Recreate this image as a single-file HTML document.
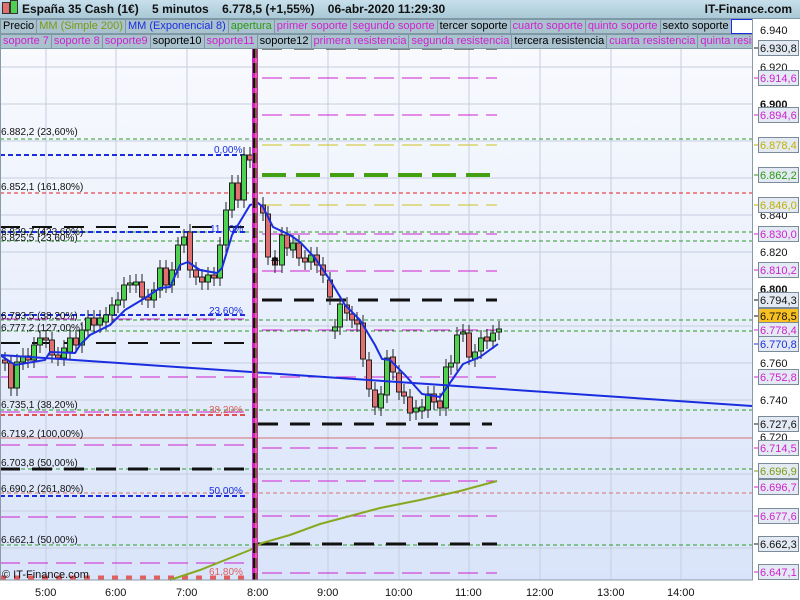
<!DOCTYPE html>
<html><head><meta charset="utf-8">
<style>
body{margin:0;width:800px;height:600px;overflow:hidden;background:#f4f6f8;font-family:"Liberation Sans",sans-serif;}
#hdr{position:absolute;left:0;top:0;width:800px;height:18px;background:linear-gradient(#c8e0ec,#a9c8d6);border-bottom:1px solid #7f98a6;font-size:12px;color:#111;}
#hdr span{position:absolute;top:2px;}
.leg{position:absolute;left:0;height:15px;font-size:11px;white-space:nowrap;overflow:hidden;width:752px;display:flex;}
.leg span{flex:none;box-sizing:border-box;height:15px;line-height:13px;padding:0 2px;background:#a9c2ce;border:1px solid #7f98a6;margin-right:-1px;}
svg text{font-family:"Liberation Sans",sans-serif;}
</style></head><body>
<svg width="800" height="600" style="position:absolute;left:0;top:0">
<defs><linearGradient id="bg" x1="0" y1="0" x2="0" y2="1"><stop offset="0" stop-color="#fafbfe"/><stop offset="1" stop-color="#d9e4fa"/></linearGradient></defs>
<rect x="0" y="18" width="753" height="562" fill="url(#bg)"/>
<rect x="753" y="18" width="47" height="582" fill="#fff"/>
<rect x="0" y="580" width="753" height="20" fill="#fff"/>
<g stroke="#c6cede" stroke-width="1">
<line x1="46" y1="18" x2="46" y2="580"/><line x1="116" y1="18" x2="116" y2="580"/><line x1="187" y1="18" x2="187" y2="580"/><line x1="328" y1="18" x2="328" y2="580"/><line x1="399" y1="18" x2="399" y2="580"/><line x1="469" y1="18" x2="469" y2="580"/><line x1="540" y1="18" x2="540" y2="580"/><line x1="611" y1="18" x2="611" y2="580"/><line x1="681" y1="18" x2="681" y2="580"/>
<line x1="0" y1="67" x2="753" y2="67"/><line x1="0" y1="104" x2="753" y2="104"/><line x1="0" y1="141" x2="753" y2="141"/><line x1="0" y1="178" x2="753" y2="178"/><line x1="0" y1="215" x2="753" y2="215"/><line x1="0" y1="252" x2="753" y2="252"/><line x1="0" y1="289" x2="753" y2="289"/><line x1="0" y1="326" x2="753" y2="326"/><line x1="0" y1="363" x2="753" y2="363"/><line x1="0" y1="400" x2="753" y2="400"/><line x1="0" y1="474" x2="753" y2="474"/><line x1="0" y1="511" x2="753" y2="511"/><line x1="0" y1="548" x2="753" y2="548"/>
</g>
<line x1="0" y1="438" x2="753" y2="438" stroke="#d87070"/>
<g fill="none" stroke-width="1">
<line x1="0" y1="139" x2="752" y2="139" stroke="#2a9a2a" stroke-dasharray="4,3"/>
<line x1="0" y1="193" x2="752" y2="193" stroke="#e02020" stroke-dasharray="4,3"/>
<line x1="0" y1="232" x2="752" y2="232" stroke="#2a9a2a" stroke-dasharray="4,3"/>
<line x1="0" y1="241" x2="752" y2="241" stroke="#2a9a2a" stroke-dasharray="4,3"/>
<line x1="0" y1="320" x2="752" y2="320" stroke="#2a9a2a" stroke-dasharray="4,3"/>
<line x1="0" y1="331" x2="752" y2="331" stroke="#2a9a2a" stroke-dasharray="4,3"/>
<line x1="0" y1="410" x2="752" y2="410" stroke="#2a9a2a" stroke-dasharray="4,3"/>
<line x1="0" y1="469" x2="752" y2="469" stroke="#2a9a2a" stroke-dasharray="4,3"/>
<line x1="0" y1="493" x2="752" y2="493" stroke="#d87070" stroke-dasharray="4,3"/>
<line x1="0" y1="545" x2="752" y2="545" stroke="#2a9a2a" stroke-dasharray="4,3"/>
</g>
<g stroke="#d020d0" stroke-dasharray="20,8" stroke-width="1">
<line x1="262" y1="78" x2="497" y2="78"/><line x1="262" y1="115" x2="497" y2="115"/>
<line x1="262" y1="234" x2="497" y2="234"/><line x1="262" y1="271" x2="497" y2="271"/>
<line x1="262" y1="330" x2="497" y2="330"/><line x1="262" y1="448" x2="497" y2="448"/>
<line x1="262" y1="481" x2="497" y2="481"/><line x1="262" y1="516" x2="497" y2="516"/><line x1="262" y1="573" x2="497" y2="573"/>
<line x1="0" y1="319" x2="250" y2="319"/><line x1="0" y1="377" x2="497" y2="377"/><line x1="0" y1="412" x2="250" y2="412"/>
<line x1="0" y1="445" x2="250" y2="445"/><line x1="0" y1="517" x2="250" y2="517"/><line x1="0" y1="563" x2="250" y2="563"/>
</g>
<g stroke="#d0c020" stroke-dasharray="20,8"><line x1="262" y1="145" x2="497" y2="145"/><line x1="262" y1="205" x2="497" y2="205"/></g>
<line x1="262" y1="175" x2="497" y2="175" stroke="#44a010" stroke-width="4" stroke-dasharray="24,10"/>
<g stroke="#111" stroke-width="3" stroke-dasharray="20,12">
<line x1="262" y1="48" x2="497" y2="48"/><line x1="262" y1="300" x2="497" y2="300"/><line x1="258" y1="424" x2="492" y2="424"/><line x1="258" y1="544" x2="497" y2="544"/>
<line x1="0" y1="227" x2="250" y2="227" stroke-width="2"/><line x1="0" y1="343" x2="250" y2="343" stroke-width="2"/><line x1="0" y1="469" x2="250" y2="469"/>
</g>
<g stroke="#1a2ee0" stroke-width="2" stroke-dasharray="5,3"><line x1="0" y1="155" x2="248" y2="155"/><line x1="0" y1="232" x2="248" y2="232"/><line x1="0" y1="315" x2="248" y2="315"/><line x1="0" y1="496" x2="248" y2="496"/></g>
<line x1="0" y1="415" x2="248" y2="415" stroke="#e05050" stroke-width="2" stroke-dasharray="5,3"/>
<line x1="0" y1="578" x2="250" y2="578" stroke="#e06060" stroke-width="5" stroke-dasharray="6,8"/>
<g font-size="10" fill="#111">
<text x="1" y="135">6.882,2 (23,60%)</text><text x="1" y="190">6.852,1 (161,80%)</text>
<text x="1" y="235">6.829,7 (423,60%)</text><text x="1" y="241">6.825,5 (23,60%)</text>
<text x="1" y="319">6.783,5 (38,20%)</text><text x="1" y="331">6.777,2 (127,00%)</text>
<text x="1" y="408">6.735,1 (38,20%)</text><text x="1" y="437">6.719,2 (100,00%)</text>
<text x="1" y="466">6.703,8 (50,00%)</text><text x="1" y="492">6.690,2 (261,80%)</text><text x="1" y="543">6.662,1 (50,00%)</text>
<text x="2" y="578" font-size="11">© IT-Finance.com</text>
</g>
<g font-size="10" fill="#1a2ee0"><text x="214" y="153">0,00%</text><text x="210" y="232">11,40%</text><text x="209" y="314">23,60%</text><text x="209" y="494">50,00%</text></g>
<g font-size="10" fill="#e06060"><text x="209" y="413">38,20%</text><text x="209" y="575">61,80%</text></g>
<polyline fill="none" stroke="#88a820" stroke-width="2" points="170,580 200,570 250,550 262,543 290,535 320,524 350,516 380,508 420,500 460,491 497,481"/>
<g id="c" stroke="#222" stroke-width="1"></g>
<line x1="0" y1="355" x2="752" y2="406" stroke="#1a2ee0" stroke-width="2"/>
<polyline fill="none" stroke="#1a2ee0" stroke-width="2" points="0,355 15,365 45,360 50,352 75,353 80,345 90,335 110,325 125,310 145,298 160,288 170,287 180,265 188,262 200,270 217,273 222,268 232,235 250,205 258,203 263,207 273,227 290,235 300,242 315,258 330,280 345,305 360,320 375,345 382,359 390,360 405,375 422,394 440,397 452,380 463,364 480,357 498,344"/>
<line x1="255" y1="18" x2="255" y2="580" stroke="#d020d0" stroke-width="6"/>
<line x1="255" y1="18" x2="255" y2="580" stroke="#111" stroke-width="4" stroke-dasharray="10,5"/>
<line x1="256" y1="18" x2="256" y2="580" stroke="#d0c020" stroke-width="1"/>
<path d="M275 256 l-4 5 h3 v4 h2 v-4 h3 z" fill="#111"/>
<rect x="0.5" y="18.5" width="752" height="561.5" fill="none" stroke="#8a9aa8"/>
<g font-size="11" fill="#111">
<text x="760" y="34">6.940</text><text x="760" y="71">6.920</text><text x="760" y="108" font-weight="bold">6.900</text><text x="760" y="219">6.840</text>
<text x="760" y="256">6.820</text><text x="760" y="293" font-weight="bold">6.800</text><text x="760" y="367">6.760</text><text x="760" y="404">6.740</text><text x="760" y="441">6.720</text>
</g>
<g id="rb" font-size="11"></g>
<g font-size="11" fill="#111">
<text x="35" y="596">5:00</text><text x="105" y="596">6:00</text><text x="176" y="596">7:00</text><text x="247" y="596">8:00</text><text x="317" y="596">9:00</text><text x="385" y="596">10:00</text><text x="455" y="596">11:00</text><text x="526" y="596">12:00</text><text x="597" y="596">13:00</text><text x="667" y="596">14:00</text>
</g>
</svg>
<div id="hdr"><span style="left:2px;top:2px;width:6px;height:10px;background:#e07070;border:1px solid #333"></span><span style="left:10px;top:0;width:6px;height:12px;background:#50d050;border:1px solid #333"></span>
<span style="left:22px;font-weight:bold;top:2px">España 35 Cash (1€)&nbsp;&nbsp;&nbsp; 5 minutos&nbsp;&nbsp;&nbsp; 6.778,5 (+1,55%)&nbsp;&nbsp;&nbsp; 06-abr-2020 11:29:30</span>
<span style="right:8px;font-weight:bold">IT-Finance.com</span></div>
<div class="leg" style="top:19px"><span>Precio</span><span style="color:#7a9a10">MM (Simple 200)</span><span style="color:#1a2ee0">MM (Exponencial 8)</span><span style="color:#2a9a10">apertura</span><span style="color:#d020d0">primer soporte</span><span style="color:#d020d0">segundo soporte</span><span>tercer soporte</span><span style="color:#d020d0">cuarto soporte</span><span style="color:#d020d0">quinto soporte</span><span>sexto soporte</span><span style="background:#fff;width:32px;border-color:#1a2ee0"></span></div>
<div class="leg" style="top:34px"><span style="color:#d020d0">soporte 7</span><span style="color:#d020d0">soporte 8</span><span style="color:#d020d0">soporte9</span><span>soporte10</span><span style="color:#d020d0">soporte11</span><span>soporte12</span><span style="color:#d020d0">primera resistencia</span><span style="color:#d020d0">segunda resistencia</span><span>tercera resistencia</span><span style="color:#d020d0">cuarta resistencia</span><span style="color:#d020d0">quinta resistencia</span></div>
<script>
var C=[[5,360,363],[11,363,388],[17,388,362],[23,362,356],[28,356,360],[34,360,345],[40,345,338],[46,338,340],[52,340,355],[58,355,358],[64,358,348],[70,352,338],[76,338,345],[82,345,330],[88,330,318],[94,318,325],[100,325,318],[106,322,315],[112,315,305],[118,305,300],[124,300,285],[130,285,283],[136,285,282],[142,282,297],[148,297,300],[154,300,290],[160,290,268],[166,268,285],[172,285,270],[178,270,245],[184,245,237],[190,232,270],[196,270,277],[202,277,282],[208,282,275],[214,275,278],[220,278,245],[226,245,210],[232,210,183],[238,183,200],[244,200,155],[250,155,160],
[263,205,213],[268,214,257],[275,258,265],[282,265,235],[287,235,248],[293,250,243],[299,243,258],[305,258,262],[311,262,255],[317,255,265],[323,265,275],[330,280,297],[335,331,327],[340,327,304],[347,305,313],[352,314,320],[357,320,324],[363,323,359],[369,360,389],[375,390,407],[381,408,394],[387,395,358],[393,357,372],[399,373,392],[404,392,396],[410,397,413],[416,412,408],[422,411,407],[428,410,394],[434,394,402],[440,401,408],[446,408,367],[451,367,363],[457,363,335],[463,334,332],[469,333,357],[475,359,352],[481,351,338],[487,337,341],[493,341,333],[499,332,329]];
var s='';C.forEach(function(c){var x=c[0],o=c[1],cl=c[2],t=Math.min(o,cl),b=Math.max(o,cl);var g=cl<o;s+='<line x1="'+x+'" y1="'+(t-8)+'" x2="'+x+'" y2="'+(b+8)+'"/><rect x="'+(x-2.5)+'" y="'+t+'" width="5" height="'+Math.max(1,b-t)+'" fill="'+(g?'#50d050':'#e07070')+'"/>';});
document.getElementById('c').innerHTML=s;
var R=[['6.930,8',48,'#111'],['6.914,6',78,'#d020d0'],['6.894,6',115,'#d020d0'],['6.878,4',145,'#c0b000'],['6.862,2',175,'#2a9a10'],['6.846,0',205,'#c0b000'],['6.830,0',234,'#d020d0'],['6.810,2',270,'#d020d0'],['6.794,3',300,'#111'],['6.778,5',316,'#111',1],['6.778,4',330,'#d020d0'],['6.770,8',344,'#1a2ee0'],['6.752,8',377,'#d020d0'],['6.727,6',424,'#111'],['6.714,5',448,'#d020d0'],['6.696,9',471,'#7a9a10'],['6.696,7',487,'#d020d0'],['6.677,6',516,'#d020d0'],['6.662,3',544,'#111'],['6.647,1',572,'#d020d0']];
var r='';R.forEach(function(a){r+='<line x1="754" y1="'+a[1]+'" x2="758" y2="'+a[1]+'" stroke="'+a[2]+'"/><rect x="758.5" y="'+(a[1]-7.5)+'" width="40" height="15" fill="'+(a[3]?'#f8c020':'#e4eaf4')+'" stroke="#7a8a99"/><text x="760" y="'+(a[1]+4)+'" fill="'+a[2]+'">'+a[0]+'</text>';});
document.getElementById('rb').innerHTML=r;
</script>
</body></html>
